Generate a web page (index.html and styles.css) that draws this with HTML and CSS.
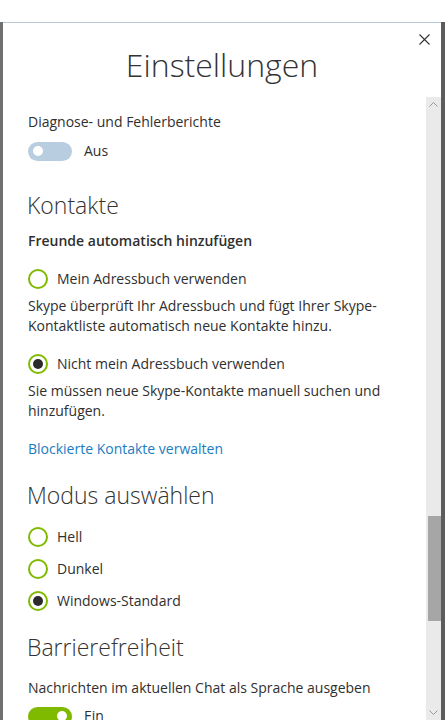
FILE: index.html
```html
<!DOCTYPE html>
<html lang="de">
<head>
    <meta charset="UTF-8">
    <meta name="viewport" content="width=device-width, initial-scale=1.0">
    <title>Einstellungen</title>
    <link rel="stylesheet" href="styles.css">
</head>
<body>
    <div class="screen">
        <div class="backdrop backdrop-left"></div>

        <div class="dialog">
            <header class="dialog-head">
                <button class="close-btn" aria-label="Schließen">
                    <svg width="11" height="11" viewBox="0 0 11 11">
                        <path d="M0.5 0.5 L10.5 10.5 M10.5 0.5 L0.5 10.5" stroke="#333" stroke-width="1.1" fill="none"/>
                    </svg>
                </button>
                <h1 class="title">Einstellungen</h1>
            </header>

            <div class="dialog-body">
                <div class="content">
                    <p class="label first">Diagnose- und Fehlerberichte</p>
                    <div class="toggle-row">
                        <span class="toggle off"><span class="knob"></span></span>
                        <span>Aus</span>
                    </div>

                    <h2 class="section-title wide">Kontakte</h2>
                    <p class="label strong">Freunde automatisch hinzufügen</p>

                    <div class="radio-row first-radio">
                        <span class="radio"></span>
                        <span>Mein Adressbuch verwenden</span>
                    </div>
                    <p class="hint">Skype überprüft Ihr Adressbuch und fügt Ihrer Skype-Kontaktliste automatisch neue Kontakte hinzu.</p>

                    <div class="radio-row first-radio">
                        <span class="radio checked"></span>
                        <span>Nicht mein Adressbuch verwenden</span>
                    </div>
                    <p class="hint">Sie müssen neue Skype-Kontakte manuell suchen und hinzufügen.</p>

                    <a class="link" href="#">Blockierte Kontakte verwalten</a>

                    <h2 class="section-title">Modus auswählen</h2>
                    <div class="radio-list">
                        <div class="radio-row">
                            <span class="radio"></span>
                            <span>Hell</span>
                        </div>
                        <div class="radio-row">
                            <span class="radio"></span>
                            <span>Dunkel</span>
                        </div>
                        <div class="radio-row">
                            <span class="radio checked"></span>
                            <span>Windows-Standard</span>
                        </div>
                    </div>

                    <h2 class="section-title">Barrierefreiheit</h2>
                    <p class="label spaced">Nachrichten im aktuellen Chat als Sprache ausgeben</p>
                    <div class="toggle-row tight">
                        <span class="toggle on"><span class="knob"></span></span>
                        <span>Ein</span>
                    </div>
                </div>

                <div class="scrollbar">
                    <div class="scroll-btn">
                        <svg width="9" height="5" viewBox="0 0 9 5"><path d="M0.5 4.5 L4.5 0.5 L8.5 4.5" stroke="#9a9a9a" fill="none"/></svg>
                    </div>
                    <div class="track"><div class="thumb"></div></div>
                    <div class="scroll-btn">
                        <svg width="9" height="5" viewBox="0 0 9 5"><path d="M0.5 0.5 L4.5 4.5 L8.5 0.5" stroke="#9a9a9a" fill="none"/></svg>
                    </div>
                </div>
            </div>
        </div>

        <div class="backdrop backdrop-right"></div>
    </div>
</body>
</html>
```

FILE: styles.css
```css
/* styles.css */

body {
    margin: 0;
    background-color: #fff;
    font-family: "Open Sans", "Noto Sans", sans-serif;
    color: #2f2f2f;
}

.screen {
    display: flex;
    height: 720px;
    padding-top: 22px;
    box-sizing: border-box;
    overflow: hidden;
}

.backdrop-left {
    width: 3px;
    background-color: #707070;
}

.backdrop-right {
    width: 4px;
    background-color: #5c5c5c;
}

.dialog {
    flex: 1;
    display: flex;
    flex-direction: column;
    background-color: #fff;
    border-top: 1px solid #b7c7d6;
    min-width: 0;
}

.dialog-head {
    height: 74px;
    display: flex;
    flex-direction: column;
    align-items: center;
}

.close-btn {
    align-self: flex-end;
    margin: 11px 11px 0 0;
    padding: 0;
    border: none;
    background: none;
    width: 11px;
    height: 11px;
    line-height: 0;
}

.title {
    margin: 0;
    font-size: 32px;
    font-weight: 300;
    line-height: 40px;
    color: #333;
}

.dialog-body {
    flex: 1;
    display: flex;
    min-height: 0;
}

.content {
    flex: 1;
    padding-left: 25px;
    font-size: 14px;
    line-height: 20px;
}

.label {
    margin: 0;
}

.label.first {
    margin-top: 15px;
}

.label.strong {
    margin-top: 10px;
    font-weight: 600;
}

.label.spaced {
    margin-top: 15px;
}

.toggle-row {
    display: flex;
    align-items: center;
    gap: 12px;
    height: 20px;
    margin-top: 9px;
}

.toggle-row.tight {
    margin-top: 8px;
}

.toggle {
    width: 44px;
    height: 19px;
    border-radius: 10px;
    display: flex;
    align-items: center;
    padding: 0 5px;
    box-sizing: border-box;
}

.toggle .knob {
    width: 10px;
    height: 10px;
    border-radius: 50%;
    background-color: #fff;
}

.toggle.off {
    background-color: #b9cde0;
}

.toggle.on {
    background-color: #7fba00;
    justify-content: flex-end;
}

.section-title {
    margin: 20px 0 0 -1px;
    font-size: 23px;
    font-weight: 300;
    line-height: 32px;
    color: #333;
}

.section-title.wide {
    margin-top: 28px;
}

.radio-row {
    display: flex;
    align-items: center;
    gap: 9px;
    height: 20px;
}

.radio-row.first-radio {
    margin-top: 18px;
}

.radio {
    width: 20px;
    height: 20px;
    border: 2px solid #7fba00;
    border-radius: 50%;
    box-sizing: border-box;
    display: flex;
    align-items: center;
    justify-content: center;
}

.radio.checked::after {
    content: "";
    width: 10px;
    height: 10px;
    border-radius: 50%;
    background-color: #2b2b2b;
}

.hint {
    margin: 7px 0 0;
    padding-right: 40px;
}

.link {
    display: block;
    margin-top: 18px;
    color: #1a7dc2;
    text-decoration: none;
}

.radio-list {
    display: flex;
    flex-direction: column;
    gap: 12px;
    margin-top: 16px;
}

.scrollbar {
    width: 15px;
    background-color: #eaeaea;
    display: flex;
    flex-direction: column;
}

.scroll-btn {
    height: 15px;
    display: flex;
    align-items: center;
    justify-content: center;
}

.track {
    flex: 1;
    padding-left: 2px;
}

.thumb {
    margin-top: 404px;
    height: 105px;
    background-color: #a6a6a6;
}
```
